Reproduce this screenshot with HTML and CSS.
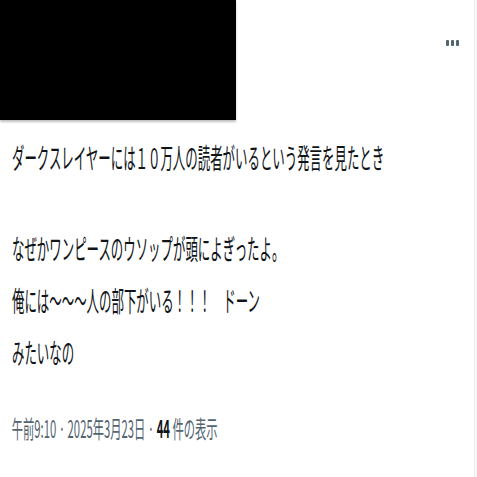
FILE: index.html
```html
<!DOCTYPE html>
<html>
<head>
    <title>ポスト</title>
    <link rel="stylesheet" href="styles.css">
</head>
<body>
    <div class="page">
        <div class="top">
            <div class="media"></div>
            <div class="more">
                <svg width="14" height="6" viewBox="0 0 14 6">
                    <rect x="0" y="0" width="3" height="6" rx="1" fill="#536471"/>
                    <rect x="5" y="0" width="3" height="6" rx="1" fill="#536471"/>
                    <rect x="10" y="0" width="3" height="6" rx="1" fill="#536471"/>
                </svg>
            </div>
        </div>

        <div class="tweet">
            <p class="line first">ダークスレイヤーには１０万人の読者がいるという発言を見たとき</p>
            <p class="line">なぜかワンピースのウソップが頭によぎったよ。</p>
            <p class="line">俺には〜〜〜人の部下がいる！！！　ドーン</p>
            <p class="line">みたいなの</p>
        </div>

        <div class="meta">
            <span>午前9:10 · 2025年3月23日 · </span><b>44</b><span> 件の表示</span>
        </div>
    </div>
</body>
</html>
```

FILE: styles.css
```css
body {
    margin: 0;
    background-color: #f7f7f7;
    font-family: "Noto Sans CJK JP", "Noto Sans", sans-serif;
    color: #0f1419;
}

.page {
    width: 474px;
    height: 477px;
    background-color: #fff;
    border-right: 1px solid #eceeef;
    overflow: hidden;
}

.top {
    display: flex;
    justify-content: space-between;
    align-items: flex-start;
}

.media {
    width: 236px;
    height: 120px;
    background-color: #000;
    box-shadow: 0 2px 2px rgba(0, 0, 0, 0.25);
}

.more {
    margin: 40px 14px 0 0;
}

.more svg {
    display: block;
}

.tweet {
    margin-top: 11px;
    width: 1000px;
    transform: scaleX(0.444);
    transform-origin: left top;
}

.line {
    margin: 0;
    padding-left: 27px;
    font-size: 28px;
    line-height: 52px;
    white-space: nowrap;
}

.first {
    margin-bottom: 39px;
}

.meta {
    margin-top: 35px;
    padding-left: 25px;
    width: 800px;
    font-size: 24px;
    line-height: 30px;
    color: #536471;
    white-space: nowrap;
    transform: scaleX(0.47);
    transform-origin: left top;
}

.meta b {
    color: #0f1419;
}
```
